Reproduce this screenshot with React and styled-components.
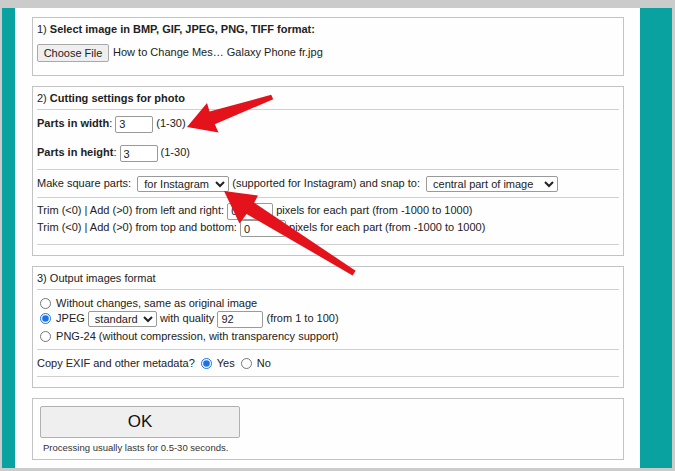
import React from 'react';
import styled, { createGlobalStyle } from 'styled-components';

const GlobalStyle = createGlobalStyle`
  html, body {
    margin: 0;
    padding: 0;
    background: #fff;
  }
  body {
    font-family: "Liberation Sans", Arial, sans-serif;
  }
`;

const Frame = styled.div`
  position: relative;
  width: 675px;
  height: 471px;
  box-sizing: border-box;
  padding: 8px 3px 3px 2px;
  background: #cbcbcb;
  display: flex;
  overflow: hidden;
`;

const Side = styled.div`
  width: ${(p) => p.w}px;
  flex: none;
  background: #0aa1a1;
`;

const Main = styled.div`
  flex: 1;
  background: #fefefe;
  padding: 9px 16px 0 17px;
  display: flex;
  flex-direction: column;
  gap: 10px;
  color: #222;
  font-size: 11px;
`;

const Panel = styled.div`
  border: 1px solid #c3c3c3;
  padding: 0 ${(p) => p.pad || 4}px;
  padding-top: ${(p) => p.top || 0}px;
  padding-bottom: ${(p) => p.bottom || 0}px;
`;

const Row = styled.div`
  height: ${(p) => p.h}px;
  display: flex;
  align-items: center;
  white-space: nowrap;
`;

const Block = styled.div`
  padding: ${(p) => p.top}px 0 ${(p) => p.bottom}px;
`;

const Line = styled.span`
  display: inline-block;
`;

const Sep = styled.div`
  height: 1px;
  background: #d0d0d0;
`;

const Spacer = styled.div`
  height: ${(p) => p.h}px;
`;

const FileButton = styled.button`
  font: inherit;
  font-size: 11px;
  width: 72px;
  height: 18px;
  padding: 0;
  background: #efefef;
  border: 1px solid #a9a9a9;
  border-radius: 2px;
  color: #222;
  vertical-align: middle;
  margin-right: 1px;
`;

const TextBox = styled.input`
  font: inherit;
  font-size: 11px;
  width: ${(p) => p.w}px;
  height: 17px;
  box-sizing: border-box;
  padding: 0 3px;
  border: 1px solid #9a9a9a;
  border-radius: 2px;
  color: #222;
  vertical-align: middle;
  margin: 0;
`;

const Select = styled.select`
  font: inherit;
  font-size: 11px;
  width: ${(p) => p.w}px;
  height: 16px;
  box-sizing: border-box;
  padding: 0 0 0 2px;
  border: 1px solid #9a9a9a;
  border-radius: 2px;
  color: #222;
  background: #fff;
  vertical-align: middle;
  margin: 0 0 0 ${(p) => p.ml || 0}px;
`;

const Radio = styled.input.attrs({ type: 'radio' })`
  width: 11px;
  height: 11px;
  margin: 0 2px 0 3px;
  vertical-align: -2px;
  accent-color: #1a73e8;
`;

const OkButton = styled.button`
  font-family: "Liberation Sans", Arial, sans-serif;
  font-size: 17px;
  width: 200px;
  height: 32px;
  background: #efefef;
  border: 1px solid #b0b0b0;
  border-radius: 2px;
  color: #111;
  padding: 0;
  display: block;
`;

const Note = styled.div`
  font-size: 9.5px;
  color: #333;
  height: 15px;
  line-height: 15px;
  margin: 2px 0 0 3px;
`;

const Overlay = styled.svg`
  position: absolute;
  left: 0;
  top: 0;
  pointer-events: none;
`;

export default function App() {
  return (
    <>
      <GlobalStyle />
      <Frame>
        <Side w={13} />
        <Main>
          <Panel bottom={8}>
            <Row h={21}>
              <Line>
                1) <b>Select image in BMP, GIF, JPEG, PNG, TIFF format:</b>
              </Line>
            </Row>
            <Row h={28}>
              <Line>
                <FileButton>Choose File</FileButton> How to Change Mes… Galaxy Phone fr.jpg
              </Line>
            </Row>
          </Panel>

          <Panel>
            <Row h={22}>
              <Line>
                2) <b>Cutting settings for photo</b>
              </Line>
            </Row>
            <Sep />
            <Row h={28}>
              <Line>
                <b>Parts in width</b>: <TextBox w={38} defaultValue="3" /> (1-30)
              </Line>
            </Row>
            <Row h={31}>
              <Line>
                <b>Parts in height</b>: <TextBox w={38} defaultValue="3" /> (1-30)
              </Line>
            </Row>
            <Sep />
            <Row h={27}>
              <Line>
                Make square parts:{' '}
                <Select w={92} ml={3} defaultValue="ig">
                  <option value="ig">for Instagram</option>
                </Select>{' '}
                (supported for Instagram) and snap to:{' '}
                <Select w={132} ml={3} defaultValue="c">
                  <option value="c">central part of image</option>
                </Select>
              </Line>
            </Row>
            <Sep />
            <Block top={4} bottom={7}>
              <Row h={18}>
                <Line>
                  Trim (&lt;0) | Add (&gt;0) from left and right: <TextBox w={46} defaultValue="0" /> pixels for each part (from -1000 to 1000)
                </Line>
              </Row>
              <Row h={17}>
                <Line>
                  Trim (&lt;0) | Add (&gt;0) from top and bottom: <TextBox w={46} defaultValue="0" /> pixels for each part (from -1000 to 1000)
                </Line>
              </Row>
            </Block>
            <Sep />
            <Spacer h={10} />
          </Panel>

          <Panel>
            <Row h={22}>
              <Line>3) Output images format</Line>
            </Row>
            <Sep />
            <Block top={5} bottom={4}>
              <Row h={16}>
                <Line>
                  <Radio name="fmt" /> Without changes, same as original image
                </Line>
              </Row>
              <Row h={16}>
                <Line>
                  <Radio name="fmt" defaultChecked /> JPEG{' '}
                  <Select w={69} defaultValue="s">
                    <option value="s">standard</option>
                  </Select>{' '}
                  with quality <TextBox w={46} defaultValue="92" /> (from 1 to 100)
                </Line>
              </Row>
              <Row h={18}>
                <Line>
                  <Radio name="fmt" /> PNG-24 (without compression, with transparency support)
                </Line>
              </Row>
            </Block>
            <Sep />
            <Row h={26}>
              <Line>
                Copy EXIF and other metadata? <Radio name="exif" defaultChecked /> Yes <Radio name="exif" /> No
              </Line>
            </Row>
            <Sep />
            <Spacer h={10} />
          </Panel>

          <Panel pad={7} top={7} bottom={4}>
            <OkButton>OK</OkButton>
            <Note>Processing usually lasts for 0.5-30 seconds.</Note>
          </Panel>
        </Main>
        <Side w={32} />

        <Overlay width="675" height="471" viewBox="0 0 675 471">
          <path
            d="M187 127 L207 103 L209.6 111.6 L271.2 94.8 L273.2 99.2 L214.8 124.2 L218.5 132.5 Z"
            fill="#e3121b"
          />
          <path
            d="M224 191 L258 195.5 L254.2 202.8 L355.6 270.8 L352.6 275.4 L246.6 214 L239.5 223.5 Z"
            fill="#e3121b"
          />
        </Overlay>
      </Frame>
    </>
  );
}
